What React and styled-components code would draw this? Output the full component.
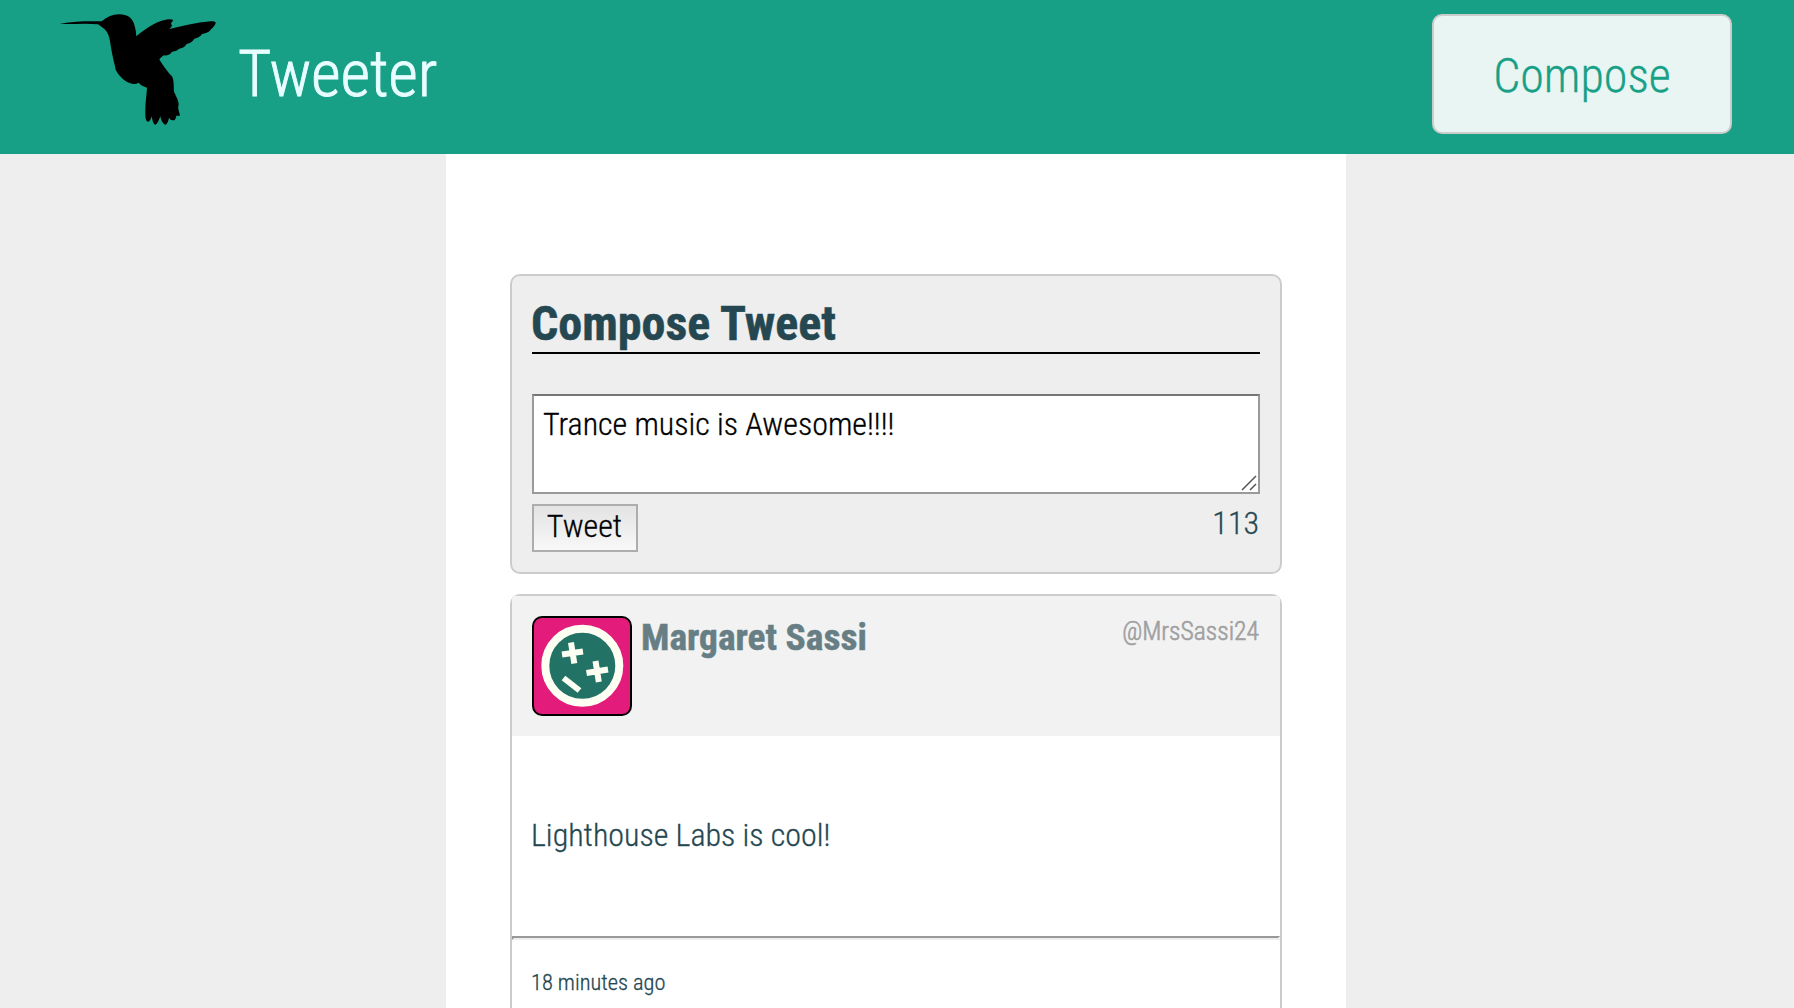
import React, { useState } from "react";
import styled, { createGlobalStyle } from "styled-components";

const GlobalStyle = createGlobalStyle`
  *, *::before, *::after { box-sizing: border-box; }
  body {
    margin: 0;
    background: #eee;
    color: #244751;
    font-family: "Roboto Condensed", Roboto, "Liberation Sans", sans-serif;
    font-stretch: 75%;
    font-weight: 300;
    font-size: 32px;
    -webkit-text-stroke: 0.3px currentColor;
    overflow: hidden;
  }
`;

const Page = styled.div`
  height: 1008px;
  display: flex;
  flex-direction: column;
  overflow: hidden;
`;

const NavBar = styled.header`
  flex: none;
  height: 154px;
  padding: 0 62px 0 50px;
  display: flex;
  align-items: center;
  justify-content: space-between;
  background: #18a087;
`;

const Brand = styled.div`
  display: flex;
  align-items: center;
`;

const Logo = styled.svg`
  width: 180px;
  height: 130px;
  margin: 0 8px 14px 0;
`;

const BrandName = styled.h1`
  margin: 0 0 4px;
  font-size: 64px;
  font-weight: 300;
  line-height: 76px;
  color: #e8fdff;
  -webkit-text-stroke: 0.9px currentColor;
`;

const ComposeButton = styled.button`
  width: 300px;
  height: 120px;
  margin-bottom: 6px;
  padding: 2px 0 0;
  border: 2px solid #ccc;
  border-radius: 10px;
  background: #e8f5f2;
  color: #18a087;
  font: inherit;
  font-size: 48px;
  text-align: center;
`;

const Main = styled.main`
  flex: 1;
  min-height: 0;
  width: 900px;
  margin: 0 auto;
  position: relative;
  left: -1px;
  padding: 120px 64px 0;
  background: #fff;
`;

const ComposeCard = styled.section`
  height: 300px;
  padding: 18px 20px;
  border: 2px solid #ccc;
  border-radius: 10px;
  background: #eee;
`;

const Title = styled.h2`
  margin: 0 0 40px;
  height: 60px;
  font-size: 48px;
  font-weight: 700;
  line-height: 59px;
  text-indent: -1px;
  border-bottom: 2px solid #000;
  -webkit-text-stroke-width: 0.5px;
`;

const Field = styled.div`
  position: relative;
  height: 100px;
`;

const TextArea = styled.textarea`
  display: block;
  width: 100%;
  height: 100%;
  margin: 0;
  padding: 9px;
  border: 2px solid #9a9a9a;
  border-top-color: #777;
  border-radius: 0;
  outline: none;
  resize: none;
  overflow: hidden;
  background: #fff;
  color: #000;
  font: inherit;
  line-height: 38px;
`;

const Grip = styled.svg`
  position: absolute;
  right: 3px;
  bottom: 3px;
  width: 16px;
  height: 16px;
`;

const Actions = styled.div`
  display: flex;
  justify-content: space-between;
  align-items: flex-start;
  padding-top: 10px;
`;

const SubmitButton = styled.button`
  width: 106px;
  height: 48px;
  padding: 0 1px 4px 0;
  border: 2px solid #adadad;
  background: linear-gradient(#e3e3e3, #f8f8f8);
  color: #000;
  font: inherit;
  line-height: 40px;
`;

const Counter = styled.span`
  padding-right: 1px;
  line-height: 38px;
`;

const TweetCard = styled.article`
  height: 500px;
  margin-top: 20px;
  border: 2px solid #ccc;
  border-radius: 10px;
`;

const TweetHeader = styled.header`
  display: flex;
  align-items: flex-start;
  height: 140px;
  padding: 20px;
  background: #f2f2f2;
`;

const Avatar = styled.svg`
  flex: none;
  width: 100px;
  height: 100px;
  border: 2px solid #000;
  border-radius: 10px;
  background: #e31c7c;
`;

const Author = styled.h3`
  flex: 1;
  margin: 0 0 0 9px;
  font-size: 37.44px;
  font-weight: 700;
  line-height: 42px;
  color: #667e84;
  -webkit-text-stroke-width: 0.5px;
`;

const Handle = styled.span`
  padding-right: 1px;
  font-size: 25.6px;
  line-height: 30px;
  color: #a0a0a0;
  -webkit-text-stroke: 0.6px currentColor;
`;

const TweetBody = styled.p`
  height: 200px;
  margin: 0;
  padding: 80px 20px 0;
  line-height: 38px;
  text-indent: -1px;
`;

const Divider = styled.hr`
  margin: 0;
  height: 4px;
  border: 2px solid;
  border-color: #999 #eee #eee #999;
`;

const TweetFooter = styled.footer`
  padding: 29px 20px;
  font-size: 22.4px;
  line-height: 26px;
  text-indent: -1px;
`;

function Hummingbird() {
  return (
    <Logo viewBox="0 0 540 390" aria-hidden="true">
      <path d="M32 56C70 49 112 48 155 49C169 38 186 28 208 28C233 28 246 39 252 56C257 70 258 82 259 94C285 72 316 52 340 46C350 43 362 41 370 45L363 55L366 63L358 72C395 63 438 53 482 49Q497 47 497 54C495 61 490 66 483 73Q477 84 456 87Q449 98 433 101Q427 112 410 117Q403 129 388 131Q379 140 366 140Q358 153 342 151Q334 155 328 163C336 178 352 200 365 213C372 223 371 238 372 260C378 274 387 287 386 301C382 308 388 320 390 332L379 332Q377 346 369 346Q361 346 357 338C355 350 350 359 346 359C339 358 333 346 331 334C327 344 322 359 316 359C309 357 307 345 305 334C303 343 299 350 294 350C285 348 286 331 286 315C286 290 290 268 291 248C281 244 270 240 266 233Q257 239 246 236C227 232 206 213 197 194C195 180 189 163 186 144C181 118 180 91 168 77C161 69 152 64 144 58C108 54 70 58 32 57Z" />
    </Logo>
  );
}

function AvatarFace() {
  return (
    <Avatar viewBox="0 0 96 96" aria-hidden="true">
      <circle cx="48.3" cy="47.8" r="37" fill="#227365" stroke="#fdfff2" strokeWidth="8" />
      <g stroke="#fdfff2" strokeWidth="6" fill="none">
        <path d="M28 36.5 49 33.5M37 24.5 40.3 45.5" />
        <path d="M52.5 55 74 51.5M61.5 43 64.8 64" />
        <path d="M29.5 60 45.5 72.5" />
      </g>
    </Avatar>
  );
}

const tweets = [
  { name: "Margaret Sassi", handle: "@MrsSassi24", text: "Lighthouse Labs is cool!", age: "18 minutes ago" },
];

export default function App() {
  const [draft, setDraft] = useState("Trance music is Awesome!!!!");
  return (
    <Page>
      <GlobalStyle />
      <NavBar>
        <Brand>
          <Hummingbird />
          <BrandName>Tweeter</BrandName>
        </Brand>
        <ComposeButton type="button">Compose</ComposeButton>
      </NavBar>
      <Main>
        <ComposeCard>
          <Title>Compose Tweet</Title>
          <Field>
            <TextArea value={draft} spellCheck={false} onChange={(e) => setDraft(e.target.value)} />
            <Grip viewBox="0 0 16 16" stroke="#555" strokeWidth="1.5" fill="none" aria-hidden="true">
              <path d="M1 15 15 1M9 15 15 9" />
            </Grip>
          </Field>
          <Actions>
            <SubmitButton type="button">Tweet</SubmitButton>
            <Counter>{140 - draft.length}</Counter>
          </Actions>
        </ComposeCard>
        {tweets.map((t) => (
          <TweetCard key={t.handle}>
            <TweetHeader>
              <AvatarFace />
              <Author>{t.name}</Author>
              <Handle>{t.handle}</Handle>
            </TweetHeader>
            <TweetBody>{t.text}</TweetBody>
            <Divider />
            <TweetFooter>{t.age}</TweetFooter>
          </TweetCard>
        ))}
      </Main>
    </Page>
  );
}
